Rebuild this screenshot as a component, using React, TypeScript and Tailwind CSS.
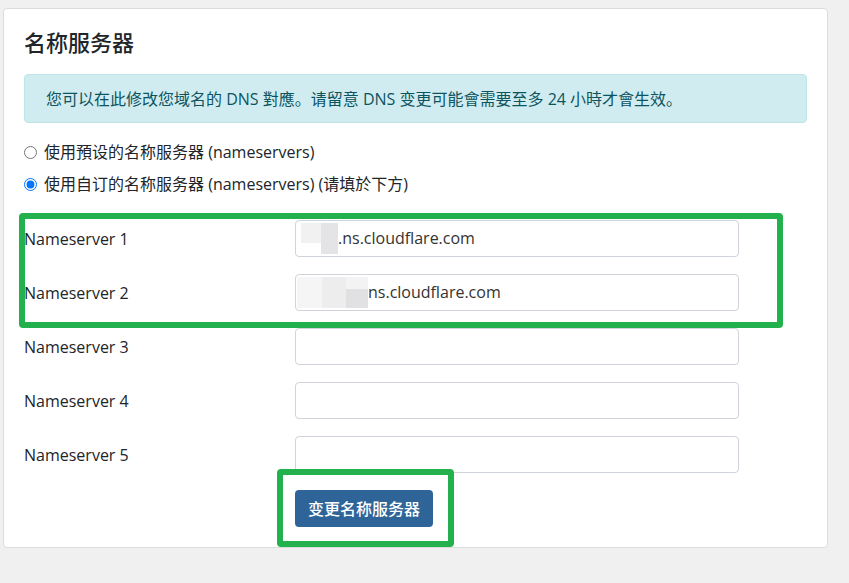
const font = { fontFamily: '"Open Sans", "Noto Sans CJK SC", sans-serif' };

function Field({ children }: { children?: React.ReactNode }) {
  return (
    <div className="relative h-[37px] w-[444px] rounded-[4px] border border-[#ced4da] bg-white overflow-hidden">
      {children}
    </div>
  );
}

function Row({ label, children }: { label: string; children?: React.ReactNode }) {
  return (
    <div className="flex items-center">
      <div className="w-[271px] text-[16px] text-[#212529]">{label}</div>
      <Field>{children}</Field>
    </div>
  );
}

export default function App() {
  return (
    <div className="min-h-[583px] w-full bg-[#f0f0f0] pt-[8px] pl-[3px]" style={font}>
      <div className="relative w-[825px] rounded-[4px] border border-[#dcdcdc] bg-white px-[20px] pt-[18px] pb-[20px]">
        <h1 className="text-[22px] leading-[30px] font-medium text-[#212529]">名称服务器</h1>

        <div className="mt-[17px] h-[49px] flex items-center rounded-[4px] border border-[#bee5eb] bg-[#d1ecf1] pl-[21px] text-[16px] text-[#0c5460]">
          您可以在此修改您域名的 DNS 對應。请留意 DNS 变更可能會需要至多 24 小時才會生效。
        </div>

        <div className="mt-[17px] flex flex-col gap-[8px] text-[16px] text-[#212529]">
          <label className="flex h-[24px] items-center gap-[7px]">
            <input type="radio" name="ns" className="m-0 h-[13px] w-[13px]" />
            使用預设的名称服务器 (nameservers)
          </label>
          <label className="flex h-[24px] items-center gap-[7px]">
            <input type="radio" name="ns" defaultChecked className="m-0 h-[13px] w-[13px]" />
            使用自订的名称服务器 (nameservers) (请填於下方)
          </label>
        </div>

        <div className="mt-[24px] flex flex-col gap-[17px]">
          <Row label="Nameserver 1">
            <div className="absolute left-[5px] top-[2px] h-[20px] w-[20px] bg-[#f1f1f2]" />
            <div className="absolute left-[25px] top-[2px] h-[31px] w-[17px] bg-[#e4e4e6]" />
            <span className="absolute left-[42px] top-0 leading-[35px] text-[16px] text-[#333]">.ns.cloudflare.com</span>
          </Row>
          <Row label="Nameserver 2">
            <div className="absolute left-[1px] top-[2px] h-[31px] w-[25px] bg-[#f5f5f5]" />
            <div className="absolute left-[26px] top-[2px] h-[31px] w-[24px] bg-[#ededee]" />
            <div className="absolute left-[50px] top-[2px] h-[12px] w-[22px] bg-[#f3f3f4]" />
            <div className="absolute left-[50px] top-[14px] h-[19px] w-[22px] bg-[#e1e1e3]" />
            <span className="absolute left-[72px] top-0 leading-[35px] text-[16px] text-[#333]">ns.cloudflare.com</span>
          </Row>
          <Row label="Nameserver 3" />
          <Row label="Nameserver 4" />
          <Row label="Nameserver 5" />
        </div>

        <div className="mt-[17px] pl-[271px]">
          <button className="h-[37px] w-[138px] rounded-[4px] bg-[#2f6498] text-[16px] font-medium text-white">
            变更名称服务器
          </button>
        </div>

        <div className="pointer-events-none absolute left-[15px] top-[204px] h-[115px] w-[764px] rounded-[4px] border-[6px] border-[#22b14c]" />
        <div className="pointer-events-none absolute left-[273px] top-[460px] h-[78px] w-[177px] rounded-[4px] border-[6px] border-[#22b14c]" />
      </div>
    </div>
  );
}
